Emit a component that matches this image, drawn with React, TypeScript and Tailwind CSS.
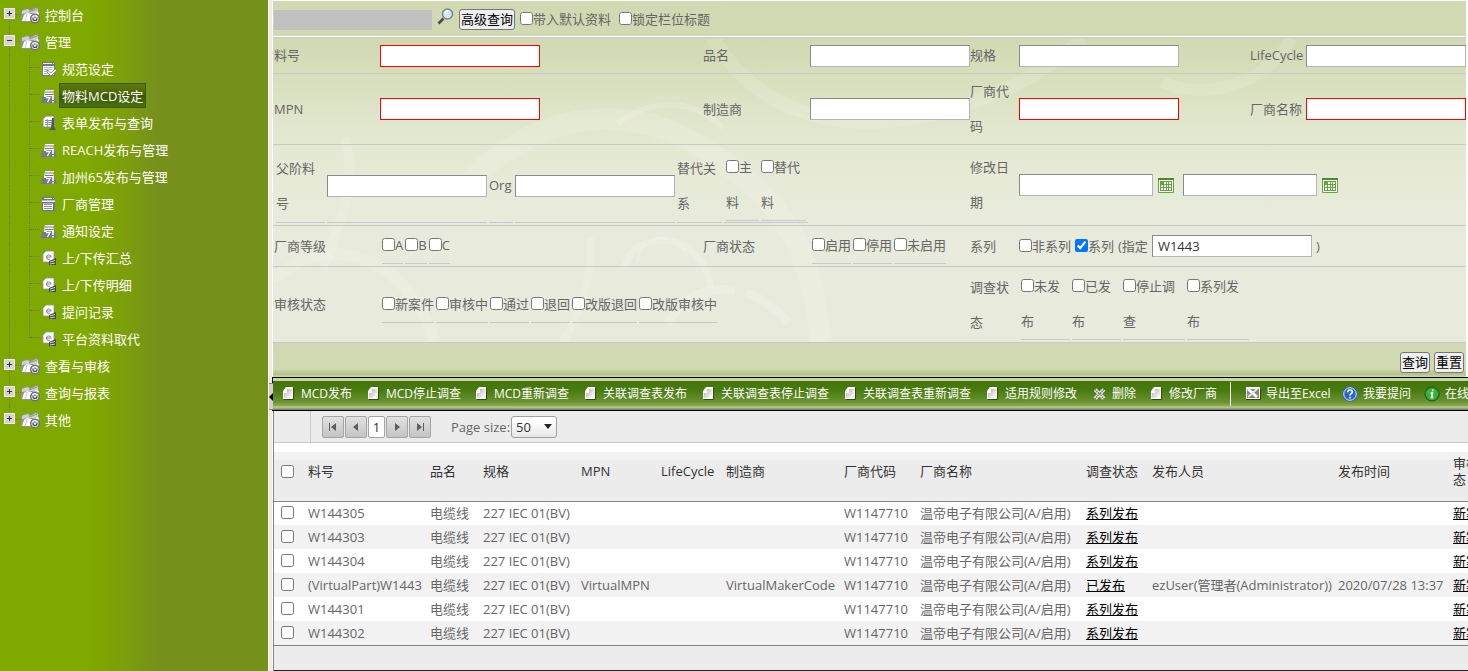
import type { ReactNode } from 'react';

type IconName = 'spec' | 'alert' | 'form' | 'list' | 'transfer';

const CHILDREN: { label: string; icon: IconName; active?: boolean }[] = [
  { label: '规范设定', icon: 'spec' },
  { label: '物料MCD设定', icon: 'alert', active: true },
  { label: '表单发布与查询', icon: 'form' },
  { label: 'REACH发布与管理', icon: 'alert' },
  { label: '加州65发布与管理', icon: 'alert' },
  { label: '厂商管理', icon: 'list' },
  { label: '通知设定', icon: 'alert' },
  { label: '上/下传汇总', icon: 'transfer' },
  { label: '上/下传明细', icon: 'transfer' },
  { label: '提问记录', icon: 'transfer' },
  { label: '平台资料取代', icon: 'transfer' },
];

const ROWS = [
  { part: 'W144305', status: '系列发布' },
  { part: 'W144303', status: '系列发布' },
  { part: 'W144304', status: '系列发布' },
  {
    part: '(VirtualPart)W1443',
    mpn: 'VirtualMPN',
    maker: 'VirtualMakerCode',
    status: '已发布',
    user: 'ezUser(管理者(Administrator))',
    time: '2020/07/28 13:37',
  },
  { part: 'W144301', status: '系列发布' },
  { part: 'W144302', status: '系列发布' },
];

const HEADERS = [
  '料号', '品名', '规格', 'MPN', 'LifeCycle', '制造商', '厂商代码',
  '厂商名称', '调查状态', '发布人员', '发布时间', '审核状态',
];

/* ---------- icons ---------- */

function FolderIcon() {
  return (
    <svg viewBox="0 0 20 18" className="w-5 h-[18px] shrink-0">
      <path d="M0 15V5l2-2 5-1 2 2 6-3 3 1v6l-8 8H2z" fill="#8d938f" />
      <path d="M1 8V5l2-1 4-1 2 2 6-3 2 1v4H7z" fill="#cfd0ce" />
      <path d="M8 6l8-3" stroke="#8d938f" />
      <path d="M1 15l2-6 3-2 5 1 6-2 1 2-5 7H1z" fill="#fff" />
      <path d="M6 8l-2 7" stroke="#c4c7c2" />
      <circle cx="14" cy="12.500" r="5" fill="#687079" />
      <circle cx="14" cy="12.500" r="3.500" fill="#f2f3f5" />
      <path d="M12 11.500v1a2 2 0 0 0 4 0v-1M14 10.500v1.500" stroke="#3c444c" strokeWidth="1.200" fill="none" />
    </svg>
  );
}

function TreeIcon({ name }: { name: IconName }) {
  return (
    <svg viewBox="0 0 16 16" className="w-4 h-4 shrink-0">
      {name === 'spec' && (
        <>
          <path d="M1 1h12l1 3v11H1z" fill="#70787e" />
          <path d="M2 5h11v9H2z" fill="#fff" />
          <path d="M2 2.500h9M12 2.500h1" stroke="#f0f0f0" />
          <path d="M3 6.500h9M3 8.500h8M3 10.500h3M3 12.500h4" stroke="#9aa1a8" strokeWidth=".8" />
          <path d="M6 9l4 3 4-4 2 1-6 6-4-4z" fill="#fff" stroke="#70787e" strokeWidth=".8" />
        </>
      )}
      {name === 'alert' && (
        <>
          <path d="M4 2h9l-1 7H3z" fill="#fff" />
          <path d="M4 1.500h10" stroke="#858b93" strokeDasharray="1.500 1" />
          <path d="M4 4h9M4 6.500h8" stroke="#70777f" />
          <path d="M1 9h4l1-1h4l4 1 2 6H0z" fill="#737a8c" />
          <path d="M5 9.500h4l-2.500 4.500" stroke="#fff" strokeWidth="1.300" fill="none" />
          <path d="M12 7v5M12 13v1.500" stroke="#fff" strokeWidth="1.600" />
        </>
      )}
      {name === 'form' && (
        <>
          <path d="M2 4l3-3h8v11H2z" fill="#fff" stroke="#858b91" />
          <path d="M4 5.500h7M4 7.500h7M4 9.500h6" stroke="#858b91" />
          <path d="M6.500 4v8" stroke="#858b91" strokeWidth=".7" />
          <path d="M11 3h2v9l2 3H8l2-2z" fill="#4e565e" />
        </>
      )}
      {name === 'list' && (
        <>
          <path d="M1 1h12l1 4v10H1z" fill="#6b7388" />
          <path d="M3 2.500h8M12 2.500h1" stroke="#fff" />
          <path d="M1 4.500h13V6H1zM2 7.500h10V14H2z" fill="#fff" />
          <path d="M3 8.500h8M3 10.500h8M3 12.500h8" stroke="#8b92a4" />
        </>
      )}
      {name === 'transfer' && (
        <>
          <path d="M2 4l3-3h8v11H2z" fill="#fff" stroke="#90969c" strokeWidth=".8" />
          <path d="M5 7h5a2.200 2.200 0 1 0-1 2" stroke="#8b9197" strokeWidth="1.100" fill="none" />
          <path d="M8 11l7-3v7H8z" fill="#41484f" />
          <path d="M9 12l5-1.500M9 14l5-1" stroke="#e8e8e8" strokeWidth=".9" />
        </>
      )}
    </svg>
  );
}

function PageIcon() {
  return (
    <svg viewBox="0 0 16 16" className="w-4 h-4 shrink-0">
      <defs>
        <linearGradient id="page" x1="0" y1="0" x2="1" y2="1">
          <stop offset=".1" stopColor="#b5b5b5" />
          <stop offset=".9" stopColor="#fdfdfd" />
        </linearGradient>
      </defs>
      <path d="M4 13.500h9.500V2" stroke="#2c5008" fill="none" />
      <path d="M3 5l3-4h7v12H3z" fill="#fff" />
      <path d="M7 3h5v9H4V7h3z" fill="url(#page)" />
    </svg>
  );
}

function DeleteIcon() {
  return (
    <svg viewBox="0 0 16 16" className="w-4 h-4 shrink-0">
      <path d="M4 3.500l9 9M13 3.500l-9 9" stroke="#f4f4f4" strokeWidth="3.600" />
      <path d="M4 3.500l9 9M13 3.500l-9 9" stroke="#777" strokeWidth="1.600" strokeDasharray="1.400 .6" />
    </svg>
  );
}

function ExcelIcon() {
  return (
    <svg viewBox="0 0 16 16" className="w-4 h-4 shrink-0">
      <path d="M1 13.500h14.500V3" stroke="#2c4a08" fill="none" />
      <path d="M1 1h14v12H1z" fill="#fff" />
      <path d="M2 3h12v9H2z" fill="#858985" />
      <path d="M3 3l9 8" stroke="#fff" strokeWidth="2.600" />
      <path d="M12 3l-9 8" stroke="#e6e6e6" strokeWidth="1.800" />
    </svg>
  );
}

function HelpIcon() {
  return (
    <svg viewBox="0 0 16 16" className="w-4 h-4 shrink-0">
      <circle cx="8" cy="8" r="7.500" fill="#2a59ac" />
      <circle cx="8" cy="8" r="6.300" fill="#2b65cb" stroke="#e4ecf8" />
      <path d="M5.700 6.200C5.700 3.200 10.400 3.300 10.300 6c0 1.600-2.300 1.700-2.300 3.400M8 10.700v1.700" stroke="#fff" strokeWidth="1.600" fill="none" />
    </svg>
  );
}

function InfoIcon() {
  return (
    <svg viewBox="0 0 16 16" className="w-4 h-4 shrink-0">
      <circle cx="8" cy="8" r="7.500" fill="#2c5a12" />
      <circle cx="8" cy="8" r="6.300" fill="#36b13a" />
      <path d="M8.700 3.500v1.800M6.500 7h2l-1 4.500h1.800" stroke="#fff" strokeWidth="1.700" fill="none" />
    </svg>
  );
}

function CalendarIcon() {
  return (
    <svg viewBox="0 0 16 15" className="w-4 h-[15px]">
      <path d="M.500.500h15v14H.500z" fill="#fff" stroke="#62a83e" />
      <path d="M0 0h16v2H0z" fill="#4b8a25" />
      <path d="M2 3h12v10H2z" fill="#63a53c" />
      <path d="M6 4h2v2H6zM9 4h1v2H9zM11 4h2v2h-2zM3 7h2v2H3zM6 7h2v2H6zM9 7h1v2H9zM11 7h2v2h-2zM3 10h2v2H3zM6 10h2v2H6zM9 10h1v2H9zM11 10h2v2h-2z" fill="#fff" />
    </svg>
  );
}

function SearchIcon() {
  return (
    <svg viewBox="0 0 17 17" className="w-[17px] h-[17px]">
      <path d="M6.500 10.500L1.500 15.500" stroke="#4a4a4a" strokeWidth="2.600" />
      <circle cx="10.500" cy="6" r="5" fill="#cfeaf6" stroke="#7a8589" strokeWidth="1.500" />
      <path d="M8 5.500a3 3 0 0 1 3-2.500" stroke="#fff" strokeWidth="1.500" fill="none" />
    </svg>
  );
}

/* ---------- sidebar ---------- */

function RootNode({ label, open, first, last }: { label: string; open?: boolean; first?: boolean; last?: boolean }) {
  return (
    <li className="relative flex items-center h-[27px] pl-1">
      <span
        className={`absolute left-[9px] border-l border-dotted border-[#6f7a5a] ${
          first ? 'top-3 bottom-0' : last ? 'top-0 h-3' : 'inset-y-0'
        }`}
      />
      <button
        aria-label={label}
        className="relative flex items-center justify-center w-[11px] h-[11px] mb-[2px] border border-[#efefef] bg-[#d4d4d4]"
      >
        <svg viewBox="0 0 9 9" className="w-[9px] h-[9px] shrink-0">
          <path d={open ? 'M2 4.500h5' : 'M2 4.500h5M4.500 2v5'} stroke="#333" />
        </svg>
      </button>
      <span className="w-[6px] border-t border-dotted border-[#6f7a5a]" />
      <FolderIcon />
      <a href="#" className="pl-1">{label}</a>
    </li>
  );
}

function Sidebar() {
  return (
    <nav className="w-[268px] shrink-0 text-white bg-[linear-gradient(to_right,#7fa800_0px,#7fa800_90px,#7c9f0b_125px,#76911b_155px,#76911b_268px)]">
      <ul className="pt-px whitespace-nowrap">
        <RootNode label="控制台" first />
        <RootNode label="管理" open />
        {CHILDREN.map((c, i) => (
          <li key={c.label} className="relative flex items-center h-[27px] pl-[9px]">
            <span className="w-5 h-full border-l border-dotted border-[#6f7a5a]" />
            <span
              className={`w-3 border-l border-dotted border-[#6f7a5a] ${
                i === CHILDREN.length - 1 ? 'h-[13px] self-start' : 'h-full'
              }`}
            >
              <span className="block h-[13px] w-[10px] border-b border-dotted border-[#6f7a5a]" />
            </span>
            <TreeIcon name={c.icon} />
            <a
              href="#"
              className={`flex items-center h-[25px] ml-[2px] px-[2px] border ${
                c.active
                  ? 'border-[#3d5508] bg-[linear-gradient(#5d7a0c,#476208_50%,#3c5705_50%,#47730a)]'
                  : 'border-transparent'
              }`}
            >
              {c.label}
            </a>
          </li>
        ))}
        <RootNode label="查看与审核" />
        <RootNode label="查询与报表" />
        <RootNode label="其他" last />
      </ul>
    </nav>
  );
}

/* ---------- query form ---------- */

const GRID = 'grid grid-cols-[106px_1fr_107px_160px_49px_231px_56px_160px] items-center pl-px border-b border-[#c8c8c8]';

function Field({ id, label, red }: { id: string; label: string; red?: boolean }) {
  return (
    <>
      <label htmlFor={id}>{label}</label>
      <TextBox id={id} red={red} />
    </>
  );
}

function TextBox({ id, red, short, label, value }: { id: string; red?: boolean; short?: boolean; label?: string; value?: string }) {
  return (
    <input
      id={id}
      type="text"
      aria-label={label}
      defaultValue={value}
      className={`block h-[22px] shrink-0 px-[5px] bg-white border leading-5 text-[#333] ${short ? 'w-[134px]' : 'w-40'} ${
        red ? 'border-[#f00]' : 'border-t-[#8a8a8a] border-l-[#8a8a8a] border-r-[#b5b5b5] border-b-[#b5b5b5]'
      }`}
    />
  );
}

function Check({ label, checked, className = '' }: { label: string; checked?: boolean; className?: string }) {
  return (
    <label className={className}>
      <input type="checkbox" defaultChecked={checked} className="w-[13px] h-[13px] align-[-1px]" />
      {label}
    </label>
  );
}

function CheckList({ items }: { items: string[] }) {
  return (
    <div className="flex gap-[2px] pl-[2px] whitespace-nowrap">
      {items.map(t => <Check key={t} label={t} className="border-b border-[#c8c8c8]" />)}
    </div>
  );
}

function Swirls() {
  return (
    <svg viewBox="0 0 1194 305" preserveAspectRatio="none" className="absolute inset-0 w-full h-full" fill="none" stroke="#fff">
      <g strokeOpacity=".13">
        <path d="M440 0C470 50 520 82 590 84S760 50 810 0" strokeWidth="14" />
        <path d="M890 44C930 62 990 50 1020 0" strokeWidth="12" />
        <path d="M190 150C260 75 350 60 430 110S540 210 548 304" strokeWidth="22" />
        <path d="M72 100C85 140 70 180 50 230" strokeWidth="10" />
        <path d="M0 242C50 195 130 210 162 304" strokeWidth="12" />
        <path d="M318 200C320 240 305 280 290 304" strokeWidth="8" />
      </g>
      <g strokeOpacity=".16">
        <path d="M345 85C380 60 420 60 450 90" strokeWidth="6" />
        <path d="M352 230C360 190 430 190 438 250" strokeWidth="7" />
        <path d="M365 225a25 25 0 0 1 50 0" strokeWidth="3" strokeDasharray="20 6" />
        <path d="M395 285C420 240 480 240 515 285" strokeWidth="9" strokeDasharray="80 12" />
      </g>
    </svg>
  );
}

function PushButton({ children }: { children: ReactNode }) {
  return (
    <button className="h-[21px] px-px border border-[#767676] rounded-[3px] bg-[#efefef] text-black leading-[19px]">
      {children}
    </button>
  );
}

const cell = 'flex items-center h-[74px] border-b border-[#c8c8c8]';

function QueryForm() {
  return (
    <form className="ml-px mr-[2px] pt-px text-[#666]" onSubmit={e => e.preventDefault()}>
      <div className="flex items-center h-[35px] pl-px bg-[#d1d9b3]">
        <div className="w-[158px] h-5 mt-[2px] bg-[#c0c0c0]" />
        <button aria-label="搜索" className="ml-[5px] mb-1"><SearchIcon /></button>
        <div className="flex ml-[5px] mr-[5px] mt-[2px]"><PushButton>高级查询</PushButton></div>
        <Check label="带入默认资料" className="mr-2" />
        <Check label="锁定栏位标题" />
      </div>
      <div className="h-[2px] bg-white border-b border-[#c8c8c8]" />

      <div className="relative leading-[35px] bg-[linear-gradient(#d1d9b3,#d6deba_35px,#dfe5ca_75px,#e4e9d3_110px,#e8ebdb_180px,#e8ebdb)]">
        <Swirls />
        <div className="relative">
          <div className={`${GRID} h-9`}>
            <Field id="part" label="料号" red />
            <Field id="name" label="品名" />
            <Field id="spec" label="规格" />
            <Field id="life" label="LifeCycle" />
          </div>

          <div className={`${GRID} h-[71px]`}>
            <Field id="mpn" label="MPN" red />
            <Field id="maker" label="制造商" />
            <Field id="vcode" label="厂商代码" red />
            <Field id="vname" label="厂商名称" red />
          </div>

          <div className={`${GRID} h-[81px]`}>
            <div className="col-span-4 flex items-end gap-[2px] pl-[2px] self-end pb-[2px]">
              <label htmlFor="parent" className={`${cell} w-[49px]`}>父阶料号</label>
              <div className={`${cell}`}><TextBox id="parent" /></div>
              <label htmlFor="org" className={`${cell} w-6`}>Org</label>
              <div className={`${cell}`}><TextBox id="org" /></div>
              <div className={`${cell} w-[45px]`}>替代关系</div>
              <div className={`${cell} gap-[2px] px-[2px]`}>
                <Check label="主料" className="w-[33px] border-b border-[#c8c8c8]" />
                <Check label="替代料" className="w-[45px] border-b border-[#c8c8c8]" />
              </div>
            </div>
            <label htmlFor="from">修改日期</label>
            <div className="col-span-3 flex items-center">
              <TextBox id="from" short />
              <button aria-label="开始日期" className="ml-[5px] mr-[9px]"><CalendarIcon /></button>
              <TextBox id="to" label="结束" short />
              <button aria-label="结束日期" className="ml-[5px]"><CalendarIcon /></button>
            </div>
          </div>

          <div className={`${GRID} h-[41px]`}>
            <span>厂商等级</span>
            <CheckList items={['A', 'B', 'C']} />
            <span>厂商状态</span>
            <CheckList items={['启用', '停用', '未启用']} />
            <span>系列</span>
            <div className="col-span-3 flex items-center whitespace-nowrap">
              <Check label="非系列" className="mr-1" />
              <Check label="系列" checked className="mr-1" />
              <label htmlFor="series" className="mr-1">(指定</label>
              <TextBox id="series" value="W1443" />
              <span className="ml-1">)</span>
            </div>
          </div>

          <div className={`${GRID} h-[76px]`}>
            <span>审核状态</span>
            <div className="col-span-3">
              <CheckList items={['新案件', '审核中', '通过', '退回', '改版退回', '改版审核中']} />
            </div>
            <span>调查状态</span>
            <div className="col-span-3 flex gap-[2px] pl-[2px]">
              <Check label="未发布" className="w-[49px] border-b border-[#c8c8c8]" />
              <Check label="已发布" className="w-[49px] border-b border-[#c8c8c8]" />
              <Check label="停止调查" className="w-[62px] border-b border-[#c8c8c8]" />
              <Check label="系列发布" className="w-[62px] border-b border-[#c8c8c8]" />
            </div>
          </div>
        </div>
      </div>

      <div className="flex items-center justify-end gap-1 h-[34px] pt-1 pr-[2px] bg-[linear-gradient(#d1d9b3,#d1d9b3_75%,#b3c283_92%,#cfdaab)]">
        <PushButton>查询</PushButton>
        <PushButton>重置</PushButton>
      </div>
    </form>
  );
}

/* ---------- toolbar ---------- */

function Tool({ icon, label, className }: { icon: ReactNode; label: string; className: string }) {
  return (
    <button className={`flex items-center gap-[5px] shrink-0 whitespace-nowrap ${className}`}>
      {icon}
      <span>{label}</span>
    </button>
  );
}

function Toolbar() {
  return (
    <div
      role="toolbar"
      className="flex items-center h-[34px] pl-[7px] overflow-hidden border border-r-0 border-black text-white text-xs bg-[linear-gradient(#c9d6a3_0px,#c9d6a3_3px,#42750a_3px,#487a10_12px,#6a9331_24px,#8fae55_28px,#c0cf9c_29px,#6c7a55_32px)]"
    >
      <Tool icon={<PageIcon />} label="MCD发布" className="w-[85px]" />
      <Tool icon={<PageIcon />} label="MCD停止调查" className="w-[108px]" />
      <Tool icon={<PageIcon />} label="MCD重新调查" className="w-[109px]" />
      <Tool icon={<PageIcon />} label="关联调查表发布" className="w-[118px]" />
      <Tool icon={<PageIcon />} label="关联调查表停止调查" className="w-[142px]" />
      <Tool icon={<PageIcon />} label="关联调查表重新调查" className="w-[142px]" />
      <Tool icon={<PageIcon />} label="适用规则修改" className="w-[107px]" />
      <Tool icon={<DeleteIcon />} label="删除" className="w-[57px]" />
      <Tool icon={<PageIcon />} label="修改厂商" className="w-[82px]" />
      <span className="w-px h-6 mr-[14px] shrink-0 bg-white" />
      <Tool icon={<ExcelIcon />} label="导出至Excel" className="w-[97px]" />
      <Tool icon={<HelpIcon />} label="我要提问" className="w-[82px]" />
      <Tool icon={<InfoIcon />} label="在线帮助" className="w-[82px]" />
    </div>
  );
}

/* ---------- result grid ---------- */

function PagerButton({ label, d }: { label: string; d: string }) {
  return (
    <button
      aria-label={label}
      className="flex items-center justify-center w-[22px] h-[22px] border border-[#a5a5a5] rounded-[2px] bg-[linear-gradient(#e2e2e2,#c4c4c4)]"
    >
      <svg viewBox="0 0 10 10" className="w-[10px] h-[10px]"><path d={d} fill="#5c5c5c" /></svg>
    </button>
  );
}

function ResultGrid() {
  return (
    <div className="ml-px border-l border-[#828282] text-[#666] overflow-hidden">
      <div className="flex items-center h-8 bg-[#ececec] border-b border-[#c8c8c8]">
        <div className="w-[37px] h-full border-r border-[#c8c8c8]" />
        <div className="flex items-center gap-px pl-[11px]">
          <PagerButton label="首页" d="M1 1h1v8H1zM8 1v8L3 5z" />
          <PagerButton label="上一页" d="M7 1v8L2 5z" />
          <button className="w-[17px] h-[22px] border border-[#a5a5a5] rounded-[2px] bg-white text-[#333] leading-5">1</button>
          <PagerButton label="下一页" d="M3 1v8l5-4z" />
          <PagerButton label="末页" d="M2 1v8l5-4zM8 1h1v8H8z" />
        </div>
        <label htmlFor="size" className="w-[60px] ml-5 whitespace-nowrap">Page size:</label>
        <div className="relative">
          <select
            id="size"
            className="block appearance-none w-[46px] h-[22px] pl-1 leading-5 border border-[#a0a0a0] rounded-[3px] text-[#333] bg-[linear-gradient(#fff,#fff_20%,#e6e6e6)]"
          >
            <option>50</option>
          </select>
          <svg viewBox="0 0 8 5" className="absolute right-[5px] top-2 w-2 h-[5px] pointer-events-none">
            <path d="M0 0h8L4 5z" fill="#222" />
          </svg>
        </div>
      </div>

      <table className="table-fixed w-[1228px] mt-[9px] border-b border-[#828282] text-left whitespace-nowrap">
        <colgroup>
          <col className="w-[34px]" />
          <col className="w-[122px]" />
          <col className="w-[53px]" />
          <col className="w-[98px]" />
          <col className="w-[80px]" />
          <col className="w-[65px]" />
          <col className="w-[118px]" />
          <col className="w-[76px]" />
          <col className="w-[166px]" />
          <col className="w-[66px]" />
          <col className="w-[186px]" />
          <col className="w-[115px]" />
          <col />
        </colgroup>
        <thead>
          <tr className="h-[49px] border-b border-[#828282] text-[#333] bg-[linear-gradient(#f2f2f2_8px,#ececec_8px)]">
            <th className="pl-[7px] pb-[10px]">
              <input type="checkbox" aria-label="全选" className="block w-[13px] h-[13px]" />
            </th>
            {HEADERS.map((h, i) => (
              <th
                key={h}
                className={`pb-[10px] font-normal leading-4 ${i === HEADERS.length - 1 ? 'pr-2 whitespace-normal' : ''}`}
              >
                {h}
              </th>
            ))}
          </tr>
        </thead>
        <tbody>
          {ROWS.map(r => (
            <tr key={r.part} className="h-6 leading-5 bg-white even:bg-[#f2f2f2]">
              <td className="pl-[7px] pb-px">
                <input type="checkbox" aria-label={r.part} className="block w-[13px] h-[13px]" />
              </td>
              <td>{r.part}</td>
              <td>电缆线</td>
              <td>227 IEC 01(BV)</td>
              <td>{r.mpn}</td>
              <td />
              <td>{r.maker}</td>
              <td>W1147710</td>
              <td>温帝电子有限公司(A/启用)</td>
              <td><a href="#" className="underline text-black">{r.status}</a></td>
              <td>{r.user}</td>
              <td>{r.time}</td>
              <td><a href="#" className="underline text-black">新案件</a></td>
            </tr>
          ))}
        </tbody>
      </table>
      <div className="h-[25px] bg-[#ececec] border-b border-[#222]" />
    </div>
  );
}

export default function App() {
  return (
    <div className="flex min-h-screen bg-white text-[13px] leading-5 font-['Open_Sans','Noto_Sans_CJK_SC',sans-serif]">
      <Sidebar />
      <div className="relative w-1 shrink-0 bg-[#ececec] border-l border-white">
        <button
          aria-label="收起"
          className="absolute left-0 top-[383px] flex items-center justify-end w-1 h-[27px] bg-[#d0d0d0] border-y border-[#828282]"
        >
          <svg viewBox="0 0 4 8" className="w-1 h-2 shrink-0"><path d="M4 0v8L0 4z" fill="#000" /></svg>
        </button>
      </div>
      <main className="flex-1 min-w-0 overflow-hidden">
        <QueryForm />
        <Toolbar />
        <ResultGrid />
      </main>
    </div>
  );
}
